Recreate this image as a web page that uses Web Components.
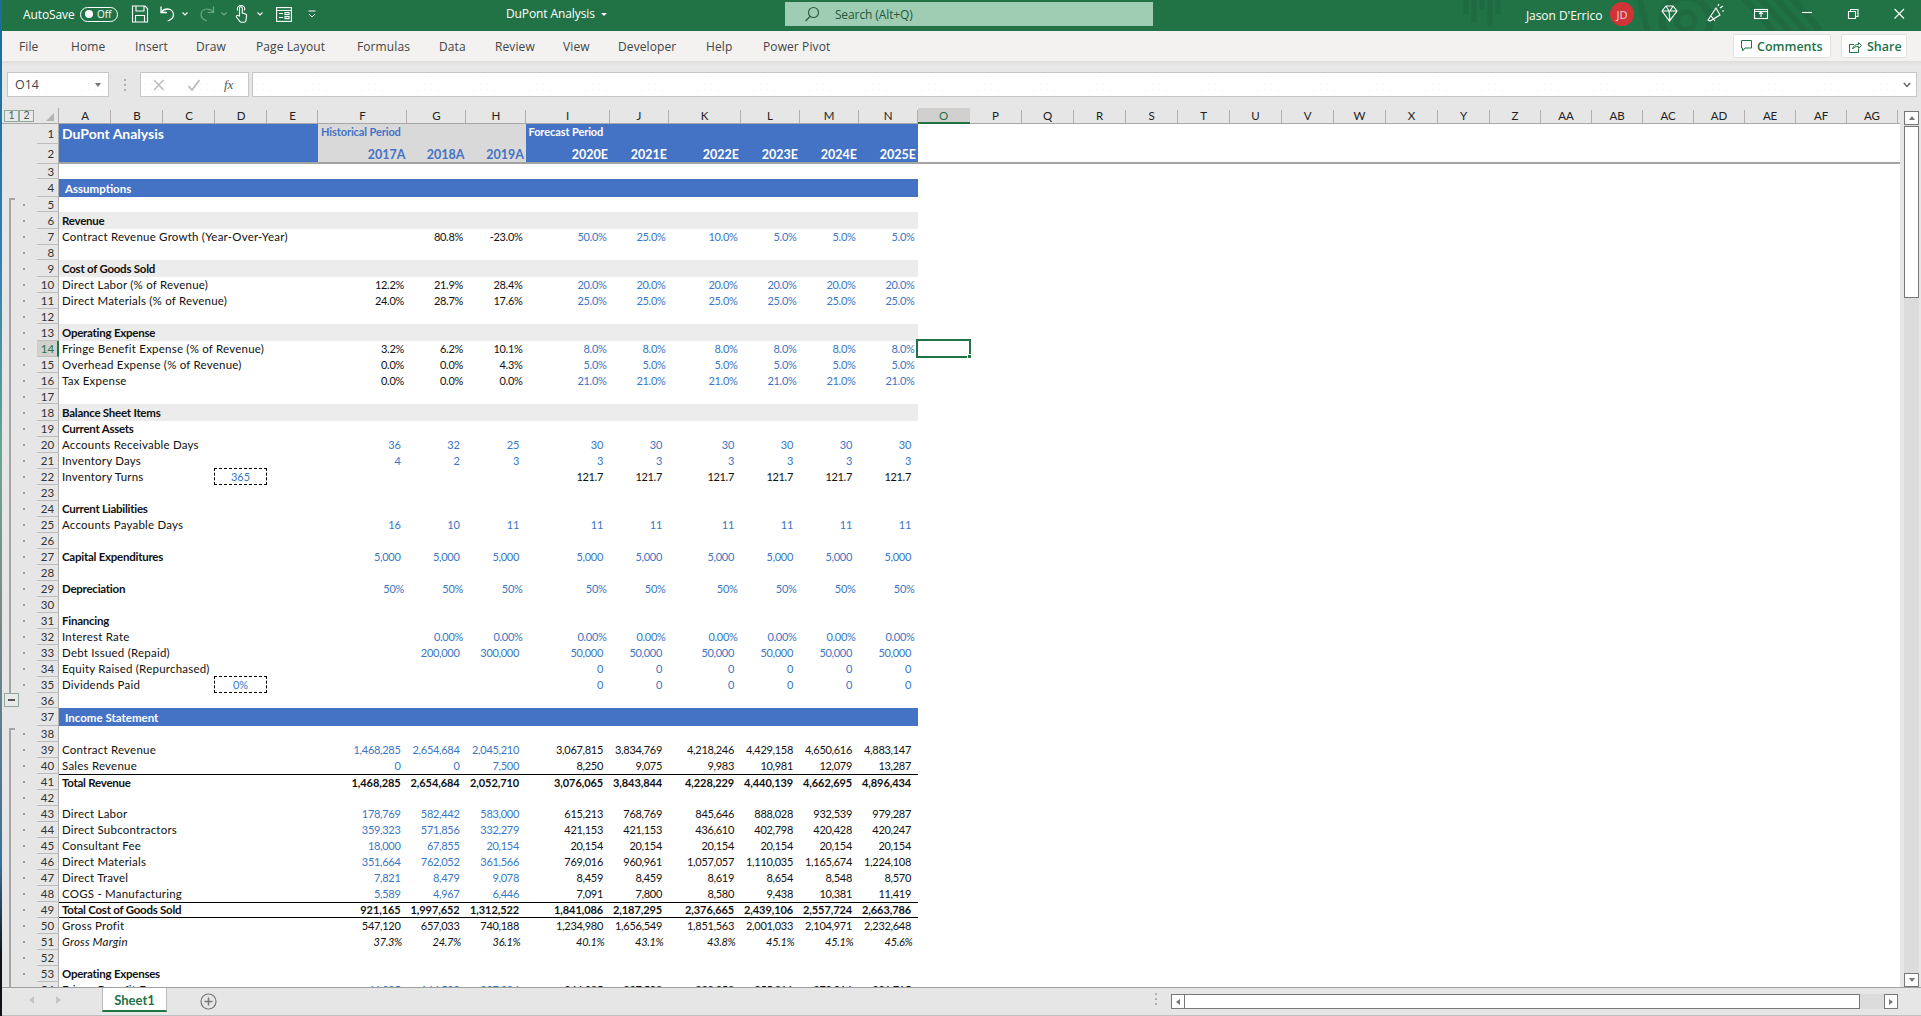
<!DOCTYPE html>
<html><head><meta charset="utf-8"><title>DuPont Analysis</title>
<style>
html,body{margin:0;padding:0;background:#e6e6e6;overflow:hidden}
body{font-family:"Open Sans","Liberation Sans",sans-serif}
</style></head><body>
<xl-app>
  <xl-titlebar></xl-titlebar>
  <xl-tabs></xl-tabs>
  <xl-formula></xl-formula>
  <xl-sheetarea></xl-sheetarea>
  <xl-status></xl-status>
</xl-app>
<script>
function def(name,css,html,init){
  customElements.define(name,class extends HTMLElement{
    constructor(){super();const s=this.attachShadow({mode:'open'});
      s.innerHTML='<style>'+css+'</style>'+html;if(init)init(s,this);}
  });
}
const UI='"Open Sans","Liberation Sans",sans-serif';
def('xl-app',`:host{display:flex;flex-direction:column;width:1921px;height:1016px;box-sizing:border-box;padding-left:2px;position:relative;overflow:hidden;
  background:linear-gradient(180deg,#1a6a9a 0,#2f7fb0 25%,#6aa58f 45%,#7d8a86 60%,#3a6f97 85%,#101418 94%,#101418 100%) left top/2px 100% no-repeat,#e6e6e6}`,`<slot></slot>`);

/* ---------- title bar ---------- */
const ic={
 save:'<svg width="18" height="18" viewBox="0 0 18 18" fill="none" stroke="#fff" stroke-width="1.1"><path d="M1.5 1h12.5l2.5 2.5V17h-15z"/><path d="M5 1v5h8V1M4.5 17v-6.5h9V17"/></svg>',
 undo:'<svg width="15" height="18" viewBox="0 0 15 18" fill="none" stroke="#fff" stroke-width="1.3"><path d="M1 1.5v6h6"/><path d="M1.3 7.2C3 4.8 5 4 7.5 4c3.4 0 6 2.5 6 5.6 0 3.200-2.600 5.400-5.800 6.400"/></svg>',
 redo:'<svg width="16" height="18" viewBox="0 0 15 18" fill="none" stroke="#6ea888" stroke-width="1.2"><path d="M14 1.5v6H8"/><path d="M13.700 7.200C12 4.800 10 4 7.500 4c-3.400 0-6 2.500-6 5.600 0 3.200 2.600 5.400 5.800 6.400"/></svg>',
 touch:'<svg width="13" height="18" viewBox="0 0 13 18" fill="none" stroke="#fff" stroke-width="1.1"><path d="M4.500 11V3.200a1.400 1.400 0 0 1 2.800 0V8l3.300 1a1.500 1.500 0 0 1 1 1.700L11 15.500c-.2 1-1 1.800-2 1.800H6.500c-.7 0-1.300-.3-1.700-.9L1.500 12c-.6-1 .6-2.200 1.600-1.400z"/><path d="M2.800 5.500a3.600 3.600 0 1 1 6.500 0"/></svg>',
 form:'<svg width="16" height="15" viewBox="0 0 16 15" fill="none" stroke="#fff" stroke-width="1.1"><rect x=".6" y=".6" width="14.800" height="13.800"/><path d="M.6 3.500h14.800M3 6.500h4M3 10.500h4"/><rect x="9" y="5.600" width="4" height="2"/><rect x="9" y="9.600" width="4" height="2"/></svg>',
 chev:(c)=>'<svg width="6" height="4" viewBox="0 0 6 4" fill="none" stroke="'+c+'" stroke-width="1.100"><path d="M.5.500 3 3 5.500.500"/></svg>',
};
def('xl-titlebar',`:host{display:flex;align-items:center;height:31px;flex:none;box-sizing:border-box;padding-bottom:3px;background:#217346;color:#fff;font:12px ${UI};position:relative;overflow:hidden}
 .deco{position:absolute;left:-2px;top:0}
 .i{display:flex;flex:none;align-items:center;position:relative}
 .as{margin-left:21px;width:57px;letter-spacing:-.1px;white-space:nowrap}
 .pill{width:38px;height:15px;box-sizing:border-box;border:1.300px solid #fff;border-radius:8px;display:flex;align-items:center;padding-left:4px;gap:4px;font-size:10px}
 .pill b{width:8px;height:8px;border-radius:50%;background:#fff;flex:none}
 .title{margin-left:190px;margin-top:-2px;white-space:nowrap;letter-spacing:-.1px}
 .tri{width:0;height:0;border:3px solid transparent;border-top:3.500px solid #fff;border-bottom:0;margin-left:6px}
 .search{margin-left:178px;width:368px;height:24px;background:#9fcdb3;color:#24583c;display:flex;align-items:center;flex:none;letter-spacing:-.1px}
 .search svg{margin-left:19px;margin-right:15px}
 .name{margin-left:373px;margin-top:2px;white-space:nowrap;width:84px;letter-spacing:-.05px}
 .av{width:24px;height:24px;border-radius:50%;background:#d13438;color:#f3d6d6;font-size:11px;display:flex;align-items:center;justify-content:center}
`,`<svg class="deco" width="1921" height="31" fill="none" stroke="#1f6a41">
   <g stroke-width="5"><path d="M1466 0v14M1474 0v22M1482 0v10M1490 0v26M1498 0v14"/></g>
   <circle cx="1686" cy="21" r="9" stroke-width="5"/><circle cx="1686" cy="21" r="24" stroke-width="7"/>
   <path d="M1640 0c2 10 4 20 8 31" stroke-width="6"/>
   <g stroke-width="6"><path d="M1742-4l36 40M1758-4l36 40M1774-4l36 40M1790-4l30 34"/></g>
 </svg>
 <span class="i as">AutoSave</span>
 <span class="i pill"><b></b><span>Off</span></span>
 <span class="i" style="margin-left:13px">${ic.save}</span>
 <span class="i" style="margin-left:11px">${ic.undo}</span>
 <span class="i" style="margin-left:7px">${ic.chev('#fff')}</span>
 <span class="i" style="margin-left:11px">${ic.redo}</span>
 <span class="i" style="margin-left:6px">${ic.chev('#6ea888')}</span>
 <span class="i" style="margin-left:8px">${ic.touch}</span>
 <span class="i" style="margin-left:9px">${ic.chev('#fff')}</span>
 <span class="i" style="margin-left:13px">${ic.form}</span>
 <span class="i" style="margin-left:16px"><svg width="8" height="8" viewBox="0 0 8 8" fill="none" stroke="#fff" stroke-width="1"><path d="M.500 1h7M1 4l3 3 3-3"/></svg></span>
 <span class="i title" id="t">DuPont Analysis</span><span class="i tri"></span>
 <span class="i search"><svg width="16" height="16" viewBox="0 0 16 16" fill="none" stroke="#24583c" stroke-width="1.100"><circle cx="9.500" cy="6.500" r="5"/><path d="M6 10.500 1.500 15"/></svg>Search (Alt+Q)</span>
 <span class="i name">Jason D'Errico</span>
 <span class="i av">JD</span>
 <svg class="deco" width="1921" height="31" fill="none" stroke="#fff" stroke-width="1.100">
   <path d="M1662 11l4-5h7l4 5-7.500 10zM1662 11h15M1666 6l3 5 1 10M1673 6l-3 5"/>
   <path d="M1708 20l8-12 4 7-10 6zM1711 16l4 5M1720 8l3-2M1718 6l1-2M1722 11l2 0"/>
   <rect x="1754.500" y="9.500" width="13" height="9"/><path d="M1754.500 11.500h13M1761 17v-4.500M1759 14l2-2 2 2"/>
   <path d="M1802 12.500h10"/>
   <path d="M1848.500 11.500h7v7h-7zM1850.500 11.500V9.500h7.500v7h-2.500"/>
   <path d="M1894.500 9l9.500 9.500M1904 9l-9.500 9.500"/>
 </svg>`);

/* ---------- ribbon tabs ---------- */
def('xl-tabs',`:host{display:flex;align-items:center;height:30px;flex:none;background:#f3f2f1;color:#444;font:12px ${UI};position:relative;box-sizing:border-box;padding-left:17px}
 span{flex:none;white-space:nowrap;letter-spacing:.1px}
 .btn{flex:none;display:flex;align-items:center;gap:5px;box-sizing:border-box;height:24px;background:#fff;border:1px solid #e4e2e0;border-radius:2px;color:#217346;font-weight:600;font-size:12.500px;padding-left:7px}
`,(()=>{const t=[['File',52],['Home',64],['Insert',61],['Draw',60],['Page Layout',101],['Formulas',82],['Data',56],['Review',68],['View',55],['Developer',88],['Help',57],['Power Pivot',970]];
 return t.map(a=>`<span style="width:${a[1]}px">${a[0]}</span>`).join('')+
 `<div class="btn" style="width:98px"><svg width="11" height="12" viewBox="0 0 11 12" fill="none" stroke="#217346"><path d="M.500.500h10v7.500H4L1.500 11V8h-1z"/></svg>Comments</div>
  <div class="btn" style="width:66px;margin-left:10px"><svg width="13" height="13" viewBox="0 0 13 13" fill="none" stroke="#217346"><path d="M5 4.500H.500v8h9V9"/><path d="M3.500 9c.5-3 3-4.500 6-4.500V2.500l3 3-3 3v-2c-2.500 0-4.500.5-6 2.500z"/></svg>Share</div>`})());

/* ---------- formula bar ---------- */
def('xl-formula',`:host{display:flex;flex:none;height:47px;box-sizing:border-box;padding:11px 0 11px 5px;background:linear-gradient(180deg,#dcdcdc 0,#e9e9e9 5px,#e6e6e6 10px);font:12px ${UI};color:#444;align-items:stretch}
 .box{background:#fff radial-gradient(#eeeeee .6px,transparent .7px) 0 0/7px 7px;border:1px solid #c6c6c6;box-sizing:border-box;height:25px;flex:none;display:flex;align-items:center;position:relative}
 .nb{width:102px;padding-left:7px;font-size:12.500px;justify-content:space-between;padding-right:7px}
 .tri{width:0;height:0;border:3.500px solid transparent;border-top:4px solid #777;border-bottom:0}
 .dots{width:31px;flex:none;display:flex;flex-direction:column;gap:3px;align-items:center;justify-content:center}
 .dots i{width:2px;height:2px;background:#b0b0b0}
 .fx{width:109px;gap:21px;padding-left:11px}
 .bar{width:1665px;margin-left:3px;justify-content:flex-end;padding-right:5px}
 em{font:italic 13px "Liberation Serif",serif;color:#555;margin-left:2px}
`,`<div class="box nb">O14<span class="tri"></span></div>
 <div class="dots"><i></i><i></i><i></i></div>
 <div class="box fx">
   <svg width="14" height="12" viewBox="0 0 14 12" fill="none" stroke="#bdbdbd" stroke-width="1.600"><path d="M2 1l9.500 10M11.500 1 2 11"/></svg>
   <svg width="14" height="12" viewBox="0 0 14 12" fill="none" stroke="#bdbdbd" stroke-width="1.800"><path d="M1.500 7l3.500 4L12.500 1"/></svg>
   <em>fx</em></div>
 <div class="box bar"><svg width="8" height="6" viewBox="0 0 8 6" fill="none" stroke="#666" stroke-width="1.500"><path d="M.800 1 4 4.500 7.200 1"/></svg></div>`);

/* ---------- sheet ---------- */
const C=['A','B','C','D','E','F','G','H','I','J','K','L','M','N','O','P','Q','R','S','T','U','V','W','X','Y','Z','AA','AB','AC','AD','AE','AF','AG'];
const W=[52,52,52,52,51,89,59,59.5,84,59,72,59,59,59,52,52,52,52,52,52,52,52,52,52,52,51,51,51,51,51,51,51,51];
const blue='b',blk='k';
const R=[];
function r(n,h,o){R.push(Object.assign({n,h},o||{}));}
const sp=s=>s.split(' ').map(x=>x==='_'?'':x);
r(1,20,{hdr:1});r(2,20,{hdr:2});r(3,15,{nodot:1});r(4,18,{sect:'Assumptions',nodot:1});
r(5,15);r(6,17,{label:'Revenue',bold:1,band:1});
r(7,16,{label:'Contract Revenue Growth (Year-Over-Year)',v:sp('_ 80.8% -23.0% 50.0% 25.0% 10.0% 5.0% 5.0% 5.0%'),hc:blk,fc:blue});
r(8,15);r(9,17,{label:'Cost of Goods Sold',bold:1,band:1});
r(10,16,{label:'Direct Labor (% of Revenue)',v:sp('12.2% 21.9% 28.4% 20.0% 20.0% 20.0% 20.0% 20.0% 20.0%'),hc:blk,fc:blue});
r(11,16,{label:'Direct Materials (% of Revenue)',v:sp('24.0% 28.7% 17.6% 25.0% 25.0% 25.0% 25.0% 25.0% 25.0%'),hc:blk,fc:blue});
r(12,15);r(13,17,{label:'Operating Expense',bold:1,band:1});
r(14,16,{label:'Fringe Benefit Expense (% of Revenue)',v:sp('3.2% 6.2% 10.1% 8.0% 8.0% 8.0% 8.0% 8.0% 8.0%'),hc:blk,fc:blue,sel:1});
r(15,16,{label:'Overhead Expense (% of Revenue)',v:sp('0.0% 0.0% 4.3% 5.0% 5.0% 5.0% 5.0% 5.0% 5.0%'),hc:blk,fc:blue});
r(16,16,{label:'Tax Expense',v:sp('0.0% 0.0% 0.0% 21.0% 21.0% 21.0% 21.0% 21.0% 21.0%'),hc:blk,fc:blue});
r(17,15);r(18,17,{label:'Balance Sheet Items',bold:1,band:1});
r(19,16,{label:'Current Assets',bold:1});
r(20,16,{label:'Accounts Receivable Days',v:sp('36 32 25 30 30 30 30 30 30'),hc:blue,fc:blue});
r(21,16,{label:'Inventory Days',v:sp('4 2 3 3 3 3 3 3 3'),hc:blue,fc:blue});
r(22,16,{label:'Inventory Turns',d:'365',v:sp('_ _ _ 121.7 121.7 121.7 121.7 121.7 121.7'),hc:blk,fc:blk});
r(23,16);r(24,16,{label:'Current Liabilities',bold:1});
r(25,16,{label:'Accounts Payable Days',v:sp('16 10 11 11 11 11 11 11 11'),hc:blue,fc:blue});
r(26,16);
r(27,16,{label:'Capital Expenditures',lb:1,v:sp('5,000 5,000 5,000 5,000 5,000 5,000 5,000 5,000 5,000'),hc:blue,fc:blue});
r(28,16);
r(29,16,{label:'Depreciation',lb:1,v:sp('50% 50% 50% 50% 50% 50% 50% 50% 50%'),hc:blue,fc:blue});
r(30,16);r(31,16,{label:'Financing',bold:1});
r(32,16,{label:'Interest Rate',v:sp('_ 0.00% 0.00% 0.00% 0.00% 0.00% 0.00% 0.00% 0.00%'),hc:blue,fc:blue});
r(33,16,{label:'Debt Issued (Repaid)',v:sp('_ 200,000 300,000 50,000 50,000 50,000 50,000 50,000 50,000'),hc:blue,fc:blue});
r(34,16,{label:'Equity Raised (Repurchased)',v:sp('_ _ _ 0 0 0 0 0 0'),hc:blue,fc:blue});
r(35,16,{label:'Dividends Paid',d:'0%',v:sp('_ _ _ 0 0 0 0 0 0'),hc:blue,fc:blue});
r(36,15,{nodot:1});r(37,18,{sect:'Income Statement',nodot:1});r(38,16);
r(39,16,{label:'Contract Revenue',v:sp('1,468,285 2,654,684 2,045,210 3,067,815 3,834,769 4,218,246 4,429,158 4,650,616 4,883,147'),hc:blue,fc:blk});
r(40,16,{label:'Sales Revenue',v:sp('0 0 7,500 8,250 9,075 9,983 10,981 12,079 13,287'),hc:blue,fc:blk});
r(41,16,{label:'Total Revenue',bold:1,top:1,v:sp('1,468,285 2,654,684 2,052,710 3,076,065 3,843,844 4,228,229 4,440,139 4,662,695 4,896,434'),hc:blk,fc:blk});
r(42,16);
r(43,16,{label:'Direct Labor',v:sp('178,769 582,442 583,000 615,213 768,769 845,646 888,028 932,539 979,287'),hc:blue,fc:blk});
r(44,16,{label:'Direct Subcontractors',v:sp('359,323 571,856 332,279 421,153 421,153 436,610 402,798 420,428 420,247'),hc:blue,fc:blk});
r(45,16,{label:'Consultant Fee',v:sp('18,000 67,855 20,154 20,154 20,154 20,154 20,154 20,154 20,154'),hc:blue,fc:blk});
r(46,16,{label:'Direct Materials',v:sp('351,664 762,052 361,566 769,016 960,961 1,057,057 1,110,035 1,165,674 1,224,108'),hc:blue,fc:blk});
r(47,16,{label:'Direct Travel',v:sp('7,821 8,479 9,078 8,459 8,459 8,619 8,654 8,548 8,570'),hc:blue,fc:blk});
r(48,16,{label:'COGS - Manufacturing',v:sp('5,589 4,967 6,446 7,091 7,800 8,580 9,438 10,381 11,419'),hc:blue,fc:blk});
r(49,16,{label:'Total Cost of Goods Sold',bold:1,top:1,bot:1,v:sp('921,165 1,997,652 1,312,522 1,841,086 2,187,295 2,376,665 2,439,106 2,557,724 2,663,786'),hc:blk,fc:blk});
r(50,16,{label:'Gross Profit',v:sp('547,120 657,033 740,188 1,234,980 1,656,549 1,851,563 2,001,033 2,104,971 2,232,648'),hc:blk,fc:blk});
r(51,16,{label:'Gross Margin',it:1,v:sp('37.3% 24.7% 36.1% 40.1% 43.1% 43.8% 45.1% 45.1% 45.6%'),hc:blk,fc:blk});
r(52,16);r(53,16,{label:'Operating Expenses',bold:1});
r(54,16,{label:'Fringe Benefit Expense',v:sp('46,985 164,590 207,324 246,085 307,508 338,258 355,211 373,016 391,715'),hc:blue,fc:blk});

def('xl-grid',`:host{display:block;width:1898px;height:879px;flex:none;overflow:hidden;background:#fff;font:11px Lato,"Liberation Sans",sans-serif;color:#111;position:relative}
 .g{display:grid;position:relative;grid-template-columns:35px 22px ${W.map(x=>x+'px').join(' ')} 3px}
 .g>div{min-width:0;box-sizing:border-box;white-space:nowrap;line-height:15px}
 .gut{background:#e6e6e6;display:flex;align-items:center;justify-content:center;padding-left:9px}
 .gut i{width:2px;height:2px;background:#9a9a9a;margin-left:-1px}
 .num{background:#e6e6e6;border-bottom:1px solid #bdbdbd;border-right:1px solid #ababab;text-align:right;padding-right:4px;color:#333;letter-spacing:-.1px;display:flex;align-items:center;justify-content:flex-end;font-size:11.500px}
 .num.s{background:#d2d0ce;color:#217346;border-right:2px solid #217346;padding-right:3px}
 .ch{background:#e6e6e6;border-bottom:1px solid #a8a8a8;display:flex;align-items:center;justify-content:center;position:relative;color:#222;font-size:11.500px;letter-spacing:-.1px}
 .ch:after{content:"";position:absolute;right:0;bottom:0;top:2px;width:1px;background:#b5afaf}
 .ch.s{background:#d2d0ce;color:#217346;border-bottom:2px solid #217346}
 .ch.s:after{display:none}
 .co{background:#e6e6e6;grid-column:1/3;position:relative;display:flex;align-items:center;padding-left:2px;box-sizing:border-box;border-bottom:1px solid #a8a8a8;border-right:1px solid #ababab}
 .oln{width:15px;height:12px;box-sizing:border-box;border:1px solid #8fa89a;background:#e9e9e9;font-size:10.500px;color:#555;display:flex;align-items:center;justify-content:center}
 .tri{position:absolute;right:4px;bottom:2px;width:0;height:0;border-left:8px solid transparent;border-bottom:8px solid #b4b4b4}
 .c{display:flex;align-items:center;position:relative;padding-bottom:1px}
 .l{padding-left:3px;z-index:1;font-size:11.500px;letter-spacing:.22px}
 .l.bo{letter-spacing:-.25px}
 .b{color:#3a76c6;letter-spacing:-.3px}
 .k{color:#111;letter-spacing:-.3px}
 .n{justify-content:flex-end;padding-right:6.500px}
 .p{justify-content:flex-end;padding-right:3px}
 .band{background:#ececec}
 .bo{font-weight:700;letter-spacing:-.1px}
 .fb{background:#4472c4;color:#fff;font-weight:700;letter-spacing:0}
 .fg{background:#d9d9d9;color:#4472c4;font-weight:700}
 .top{border-top:1px solid #000}
 .bot{border-bottom:1px solid #000}
 .box{border:1px dashed #000;justify-content:center;color:#3a76c6;margin:-1px 0 0 -1px}
 .bl{border-bottom:2px solid #a3a3a3}
 .sel{position:absolute;left:-2px;top:-2px;right:-1px;bottom:-1px;border:2px solid #217346;box-sizing:border-box;z-index:3}
 .sel:after{content:"";position:absolute;right:-3px;bottom:-3px;width:5px;height:5px;background:#217346;border:1px solid #fff;box-sizing:border-box}
 .bar{position:absolute;left:7px;width:2px;background:#a6a6a6}
 .bar:before{content:"";position:absolute;left:0;top:0;width:6px;height:2px;background:#a6a6a6}
 .minus{position:absolute;left:2px;top:585px;width:15px;height:14px;box-sizing:border-box;border:1px solid #8fa89a;background:#e9e9e9;display:flex;align-items:center;justify-content:center}
 .minus i{width:7px;height:1.500px;background:#555}
`,`<div class="g" id="g"></div>`,(s)=>{
  const g=s.getElementById('g');let h='';
  g.style.gridTemplateRows='16px '+R.map(x=>x.h+'px').join(' ');
  h+=`<div class="co"><span class="oln">1</span><span class="oln">2</span><span class="tri"></span></div>`;
  C.forEach(c=>{h+=`<div class="ch${c==='O'?' s':''}">${c}</div>`});
  h+=`<div style="background:#e6e6e6;border-bottom:1px solid #a8a8a8"></div>`;
  R.forEach(x=>{
    const line=x.n===2?' bl':'';
    h+=`<div class="gut">${x.n<5||x.nodot?'':'<i></i>'}</div>`;
    h+=`<div class="num${x.sel?' s':''}">${x.n}</div>`;
    if(x.hdr){
      const fs=x.hdr===1;
      h+=`<div class="c l fb${line}" style="grid-column:span 5;font-size:14px;padding-bottom:${fs?'2px':'0'}">${fs?'DuPont Analysis':''}</div>`;
      const hy=['2017A','2018A','2019A'],fy=['2020E','2021E','2022E','2023E','2024E','2025E'];
      if(fs){
        h+=`<div class="c fg" style="grid-column:span 3;padding-left:3px;font-size:11px;letter-spacing:-.1px;padding-bottom:5px">Historical Period</div>`;
        h+=`<div class="c fb" style="grid-column:span 6;padding-left:3px;font-size:11px;letter-spacing:-.1px;padding-bottom:5px">Forecast Period</div>`;
        h+=`<div style="grid-column:17/-1"></div>`;
      }else{
        hy.forEach(t=>h+=`<div class="c fg bl" style="justify-content:flex-end;padding-right:1.500px;font-size:12.500px;padding-top:2px;padding-bottom:0">${t}</div>`);
        fy.forEach(t=>h+=`<div class="c fb bl" style="justify-content:flex-end;padding-right:1.500px;font-size:12.500px;padding-top:2px;padding-bottom:0">${t}</div>`);
        h+=`<div class="bl" style="grid-column:17/-1"></div>`;
      }
      return;
    }
    if(x.sect){
      h+=`<div class="c fb" style="grid-column:span 14;padding-left:6px;font-size:11.500px;padding-bottom:0">${x.sect}</div>`;
      h+=`<div style="grid-column:17/-1"></div>`;
      return;
    }
    const cls=(x.band?' band':'')+(x.top?' top':'')+(x.bot?' bot':'');
    const b=(x.bold||x.lb);
    const span=x.d?3:5;
    h+=`<div class="c l${b?' bo':''}${cls}" style="grid-column:span ${span};${x.it?'font-style:italic':''}">${x.label||''}</div>`;
    if(x.d)h+=`<div class="c box">${x.d}</div><div class="c${cls}"></div>`;
    for(let i=0;i<9;i++){
      const v=x.v?x.v[i]:'';
      const col=i<3?x.hc:x.fc;
      const pad=/%$/.test(v)?(x.it?' n':' p'):' n';
      const st=[];
      if(x.it){st.push('font-style:italic','padding-right:5px');}
      h+=`<div class="c${v?' '+col+pad:''}${x.bold?' bo':''}${cls}" style="${st.join(';')}">${v||''}</div>`;
    }
    h+=x.sel?`<div style="position:relative"><div class="sel"></div></div><div style="grid-column:18/-1"></div>`:`<div style="grid-column:17/-1"></div>`;
  });
  g.innerHTML=h+`<div class="bar" style="top:90px;height:495px"></div><div class="bar" style="top:620px;height:262px"></div><div class="minus"><i></i></div>`;
});

def('xl-vscroll',`:host{display:flex;flex-direction:column;flex:none;width:15px;margin:3px 0 0 4px;box-sizing:border-box;background:#dcdcdc}
 .b{height:14px;flex:none;box-sizing:border-box;border:1px solid #777;background:#fff;display:flex;align-items:center;justify-content:center}
 .t{height:172px;flex:none;box-sizing:border-box;border:1px solid #777;background:#fff;margin-top:1px}
 .f{flex:1}
 i{width:0;height:0;border:3.500px solid transparent}
 .u i{border-bottom:4px solid #777;border-top:0}.d i{border-top:4px solid #777;border-bottom:0}
`,`<div class="b u"><i></i></div><div class="t"></div><div class="f"></div><div class="b d"><i></i></div>`);

def('xl-sheetarea',`:host{display:flex;flex:none;height:879px;background:#e6e6e6}`,`<xl-grid></xl-grid><xl-vscroll></xl-vscroll>`);

/* ---------- status / sheet tabs ---------- */
def('xl-status',`:host{display:flex;align-items:flex-start;flex:none;height:29px;box-sizing:border-box;background:#e6e6e6;border-top:1px solid #a0a0a0;border-bottom:1px solid #c0c0c0;font:12px ${UI};position:relative;z-index:2}
 .nav{width:100px;flex:none;display:flex;padding:8px 0 0 27px;gap:22px;box-sizing:border-box}
 .nav i{width:0;height:0;border:4px solid transparent}
 .tab{flex:none;width:65px;height:24px;box-sizing:border-box;padding-top:1px;background:#fff;border-left:1px solid #bbb;border-right:1px solid #bbb;border-bottom:2px solid #217346;color:#217346;font:700 13px Lato,sans-serif;display:flex;align-items:center;justify-content:center}
 .plus{margin-left:33px;margin-top:5px;flex:none}
 .grip{margin-left:938px;margin-top:5px;flex:none;display:flex;flex-direction:column;gap:3px;width:16px}
 .grip i{width:2px;height:2px;background:#b0b0b0;display:block}
 .hs{flex:none;margin-top:6px;width:727px;height:15px;display:flex;box-sizing:border-box;background:#dcdcdc}
 .hb{width:14px;flex:none;box-sizing:border-box;border:1px solid #777;background:#fff;display:flex;align-items:center;justify-content:center}
 .hb i{width:0;height:0;border:3.500px solid transparent}
 .th{width:675px;flex:none;box-sizing:border-box;border:1px solid #777;border-left:0;background:#fff}
 .sp{flex:1}
`,`<div class="nav"><i style="border-right:5px solid #c4c4c4;border-left:0"></i><i style="border-left:5px solid #c4c4c4;border-right:0"></i></div>
 <div class="tab">Sheet1</div>
 <svg class="plus" width="17" height="17" viewBox="0 0 17 17" fill="none" stroke="#777"><circle cx="8.500" cy="8.500" r="7.500" stroke-width="1.200"/><path d="M4.500 8.500h8M8.500 4.500v8" stroke-width="1.500"/></svg>
 <div class="grip"><i></i><i></i><i></i></div>
 <div class="hs"><div class="hb"><i style="border-right:4px solid #777;border-left:0"></i></div><div class="th"></div><div class="sp"></div><div class="hb"><i style="border-left:4px solid #777;border-right:0"></i></div></div>`);
</script>
</body></html>
